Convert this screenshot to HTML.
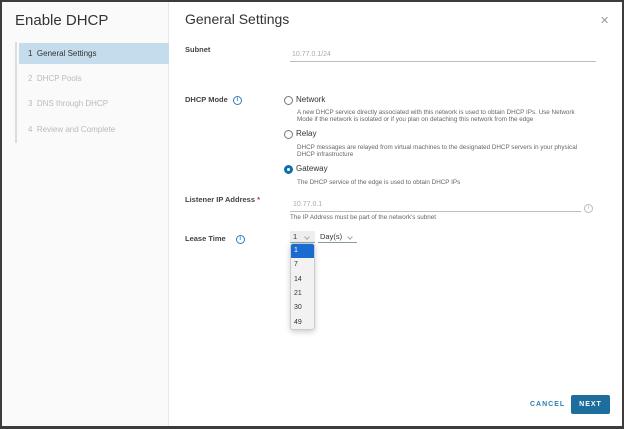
<!DOCTYPE html>
<html><head><style>
*{margin:0;padding:0;box-sizing:border-box}
body{width:624px;height:429px;background:#fff;font-family:"Liberation Sans",sans-serif;position:relative;overflow:hidden;color:#333}
.a{position:absolute;white-space:nowrap}
.frame{position:absolute;left:0;top:0;width:624px;height:429px;border:2px solid #3c3c3c;border-bottom-width:3px}
.left{position:absolute;left:2px;top:2px;width:167px;height:424px;background:#fafafa;border-right:1px solid #e8e8e8}
.lbl{font-size:7.5px;font-weight:bold;color:#444}
.desc{font-size:6.3px;color:#666;line-height:7px}
.radio{position:absolute;width:9px;height:9px;border:1px solid #777;border-radius:50%;background:#fff}
.info{display:inline-block;vertical-align:middle;margin-left:5px;width:9px;height:9px;border:1px solid #2f7fbf;border-radius:50%;font-size:6px;color:#2f7fbf;text-align:center;line-height:7px;font-weight:bold}
.opt{position:absolute;left:3px;font-size:7px;color:#333}
.chev{position:absolute;width:4px;height:4px;border-right:1px solid #aaa;border-bottom:1px solid #aaa;transform:rotate(45deg)}
</style></head><body>
<div class="left"></div>
<div class="a" style="left:15px;top:12px;font-size:15px;color:#333">Enable DHCP</div>
<div class="a" style="left:15px;top:42px;width:2px;height:101px;background:#ddd"></div>
<div class="a" style="left:19px;top:43px;width:150px;height:21px;background:#c5dcec"></div>
<div class="a" style="left:28px;top:49px;font-size:8px;color:#333">1&nbsp; General Settings</div>
<div class="a" style="left:28px;top:74px;font-size:8px;color:#bbb">2&nbsp; DHCP Pools</div>
<div class="a" style="left:28px;top:99px;font-size:8px;color:#bbb">3&nbsp; DNS through DHCP</div>
<div class="a" style="left:28px;top:125px;font-size:8px;color:#bbb">4&nbsp; Review and Complete</div>

<div class="a" style="left:185px;top:11px;font-size:14px;color:#333">General Settings</div>
<div class="a" style="left:600px;top:14px;font-size:11px;color:#999">✕</div>

<div class="a lbl" style="left:185px;top:45px">Subnet</div>
<div class="a" style="left:292px;top:51px;font-size:7px;color:#aaa">10.77.0.1/24</div>
<div class="a" style="left:290px;top:61px;width:306px;height:1px;background:#b8c0c6"></div>

<div class="a lbl" style="left:185px;top:95px">DHCP Mode<span class="info">i</span></div>
<div class="radio" style="left:284px;top:96px"></div>
<div class="a" style="left:296px;top:95px;font-size:8px;color:#333">Network</div>
<div class="a desc" style="left:297px;top:109px">A new DHCP service directly associated with this network is used to obtain DHCP IPs. Use Network<br>Mode if the network is isolated or if you plan on detaching this network from the edge</div>
<div class="radio" style="left:284px;top:130px"></div>
<div class="a" style="left:296px;top:129px;font-size:8px;color:#333">Relay</div>
<div class="a desc" style="left:297px;top:144px">DHCP messages are relayed from virtual machines to the designated DHCP servers in your physical<br>DHCP infrastructure</div>
<div class="radio" style="left:284px;top:165px;border:3px solid #0f6fa8"></div>
<div class="a" style="left:296px;top:164px;font-size:8px;color:#333">Gateway</div>
<div class="a desc" style="left:297px;top:179px">The DHCP service of the edge is used to obtain DHCP IPs</div>

<div class="a lbl" style="left:185px;top:195px">Listener IP Address <span style="color:#c33">*</span></div>
<div class="a" style="left:293px;top:201px;font-size:7px;color:#aaa">10.77.0.1</div>
<div class="a" style="left:290px;top:211px;width:291px;height:1px;background:#b8c0c6"></div>
<div class="a" style="left:584px;top:204px;width:9px;height:9px;border:1px solid #bbb;border-radius:50%;font-size:6px;color:#aaa;text-align:center;line-height:7px">i</div>
<div class="a desc" style="left:290px;top:214px">The IP Address must be part of the network's subnet</div>

<div class="a lbl" style="left:185px;top:234px">Lease Time<span class="info" style="margin-left:10px">i</span></div>
<div class="a" style="left:290px;top:231px;width:25px;height:12px;background:#eee;border-bottom:1px solid #8ab"></div>
<div class="a" style="left:293px;top:232px;font-size:7.5px">1</div>
<div class="chev" style="left:305px;top:235px"></div>
<div class="a" style="left:318px;top:231px;width:39px;height:12px;border-bottom:1px solid #8a98a0"></div>
<div class="a" style="left:320px;top:232px;font-size:7.5px">Day(s)</div>
<div class="chev" style="left:348px;top:235px"></div>

<div class="a" style="left:290px;top:243px;width:25px;height:87px;background:#f2f2f2;border:1px solid #ccc;border-radius:3px;box-shadow:0 2px 6px rgba(0,0,0,.2)">
<div style="position:absolute;left:0;top:0;width:23px;height:14px;background:#1a6bd0;border-radius:2px 2px 0 0"></div>
<div class="opt" style="top:3px;color:#fff">1</div>
<div class="opt" style="top:17px">7</div>
<div class="opt" style="top:32px">14</div>
<div class="opt" style="top:46px">21</div>
<div class="opt" style="top:60px">30</div>
<div class="opt" style="top:75px">49</div>
</div>

<div class="a" style="left:530px;top:401px;font-size:7px;font-weight:bold;color:#2f7fae;letter-spacing:1px">CANCEL</div>
<div class="a" style="left:571px;top:395px;width:39px;height:19px;background:#1d6e9c;border-radius:2px;color:#fff;font-size:7px;font-weight:bold;letter-spacing:1px;text-align:center;line-height:19px">NEXT</div>
<div class="frame"></div>
</body></html>
